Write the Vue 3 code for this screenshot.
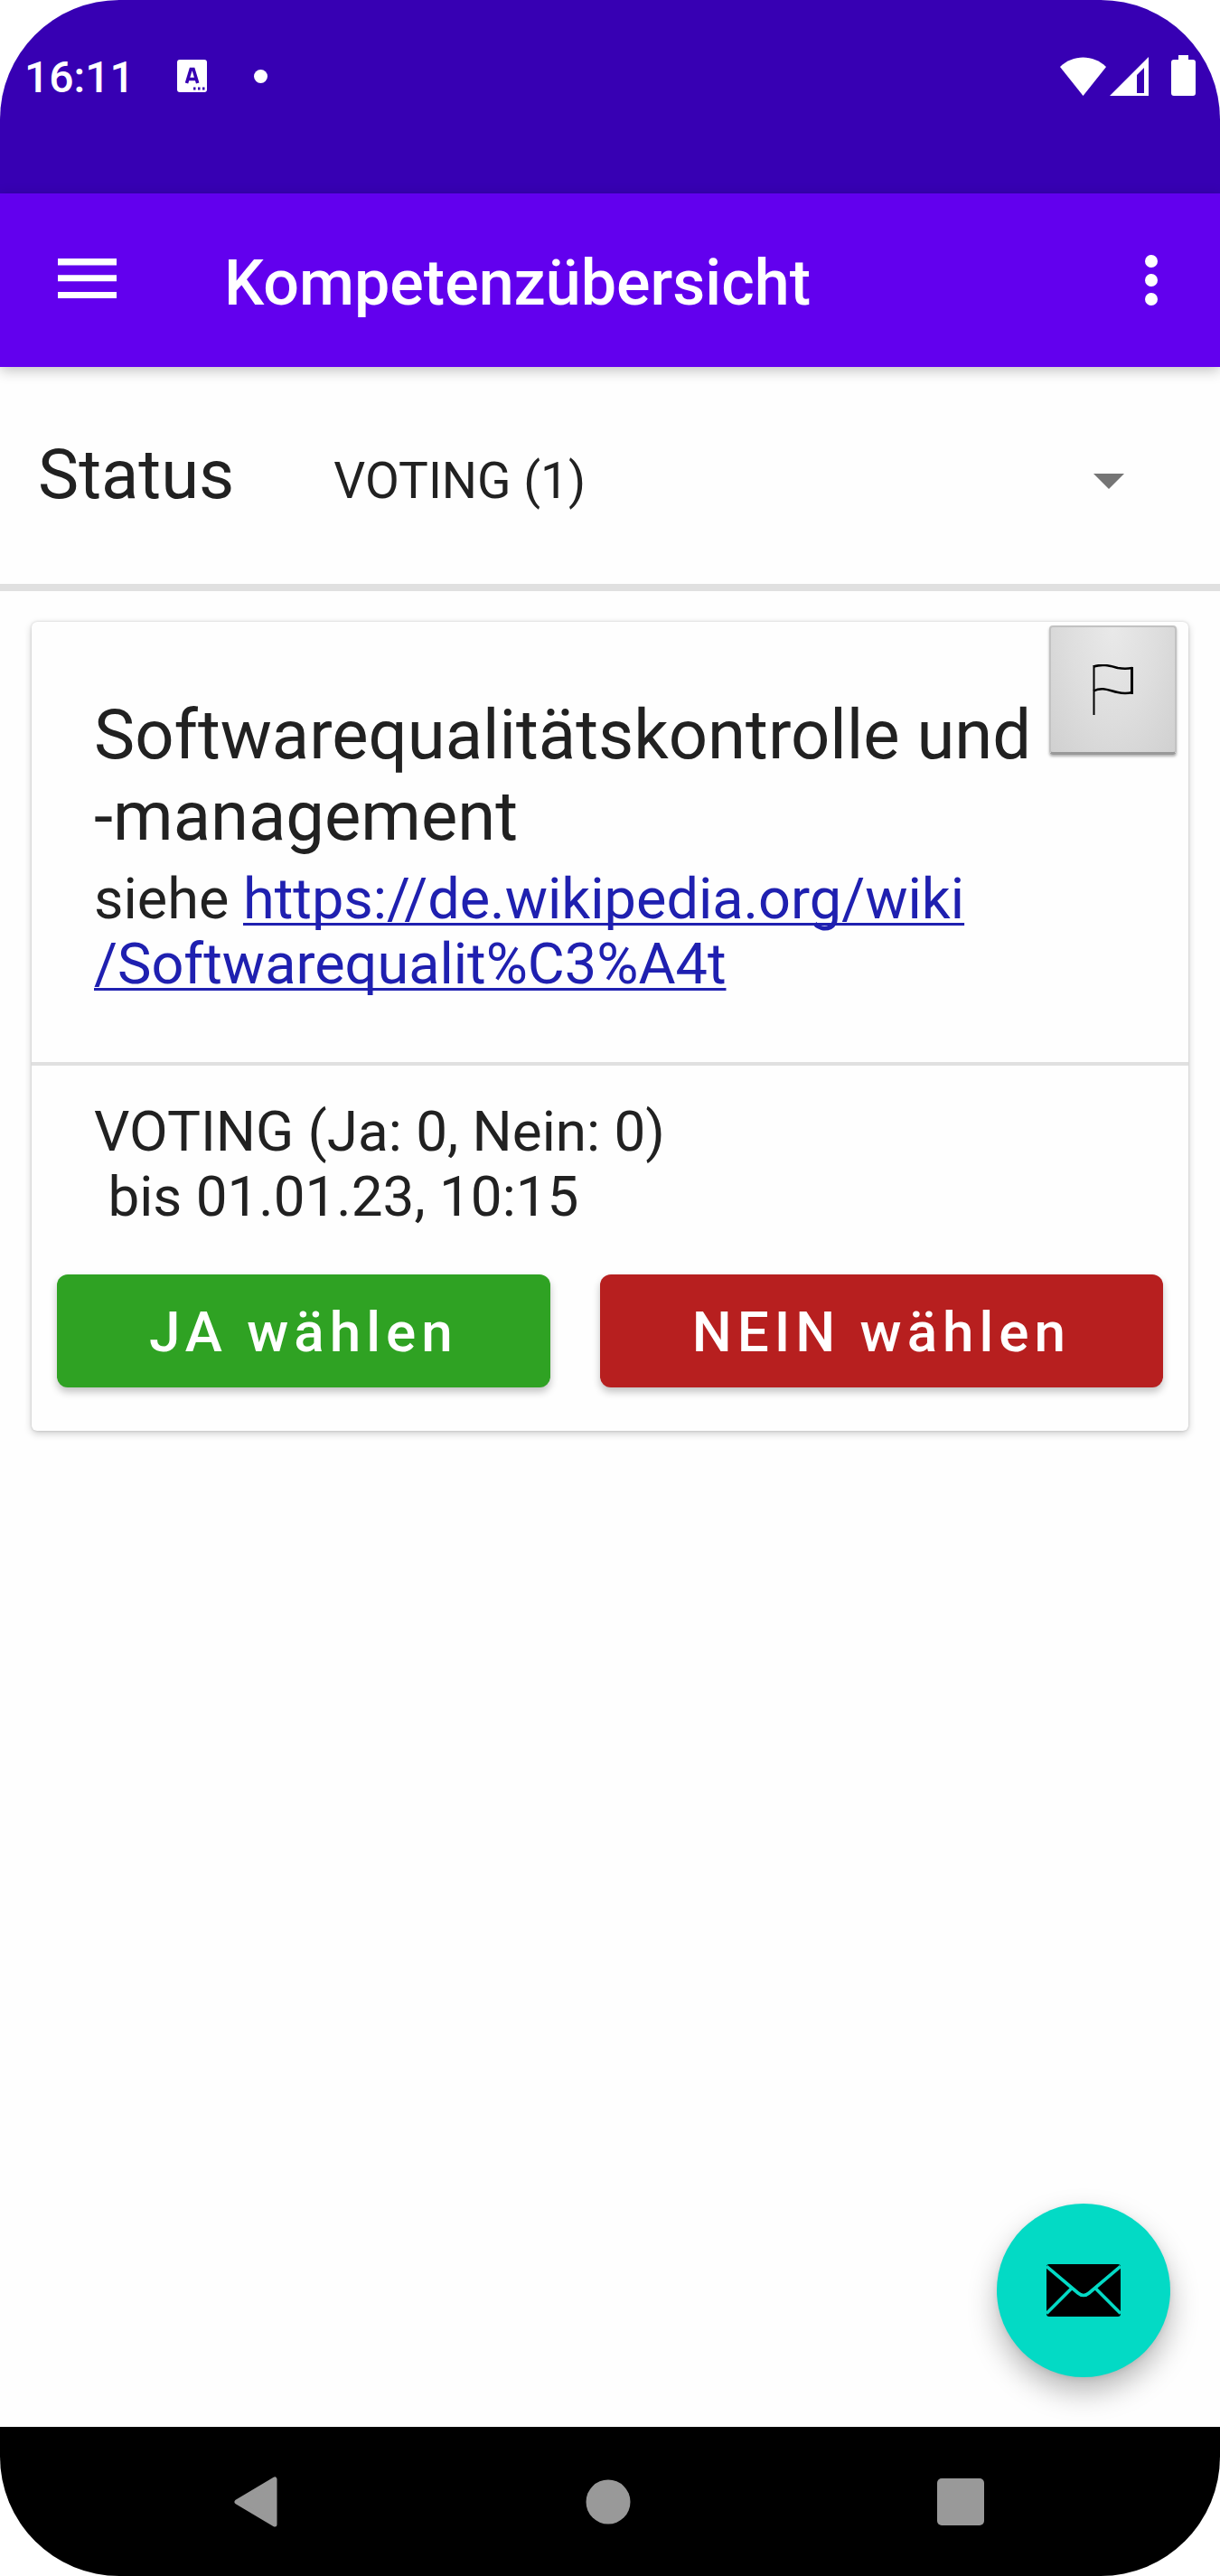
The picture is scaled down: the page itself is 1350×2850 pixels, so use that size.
<script setup>
import { ref } from 'vue'

const status = ref('voting')
const statusOptions = [{ value: 'voting', label: 'VOTING (1)' }]

const competence = {
  title: 'Softwarequalitätskontrolle und -management',
  link: 'https://de.wikipedia.org/wiki/Softwarequalit%C3%A4t',
  linkParts: ['https://de.wikipedia.org/wiki', '/Softwarequalit%C3%A4t'],
  yes: 0,
  no: 0,
  until: '01.01.23, 10:15',
}
</script>

<template>
  <div class="device">
    <div class="status-bar">
      <div class="status-left">
        <span class="clock">16:11</span>
        <svg class="keyboard-icon" width="33" height="36" viewBox="0 0 33 36" aria-hidden="true">
          <rect width="33" height="36" rx="3" fill="#fff" />
          <path d="M10.500 26 15.200 10.500h2.800L22.700 26M12.500 21.500h8" fill="none" stroke="#3700b3" stroke-width="3.600" />
          <path d="M18 30.500h2.500v3H18zm5 0h2.500v3H23zm5 0h2.500v3H28z" fill="#3700b3" />
        </svg>
        <span class="notification-dot"></span>
      </div>
      <div class="status-right">
        <svg width="98" height="45" viewBox="0 0 98 45" fill="#fff" aria-hidden="true">
          <path d="M0 13C14-1 37-1 51 13L25.500 45z" />
          <path fill-rule="evenodd" d="M98 2v43H55zM93 14l-8 8v20h8z" />
        </svg>
        <svg width="27" height="45" viewBox="0 0 27 45" fill="#fff" aria-hidden="true">
          <path d="M8 0h11v5h5q3 0 3 3v34q0 3-3 3H3q-3 0-3-3V8q0-3 3-3h5z" />
        </svg>
      </div>
    </div>

    <header class="app-bar">
      <button class="icon-button" type="button" aria-label="Menü öffnen">
        <svg width="65" height="48" viewBox="0 0 65 48" fill="#fff" aria-hidden="true">
          <path d="M0 0h65v7.500H0zM0 18.300h65v7H0zM0 37h65v7H0z" />
        </svg>
      </button>
      <h1>Kompetenzübersicht</h1>
      <button class="icon-button more" type="button" aria-label="Weitere Optionen">
        <svg width="14" height="56" viewBox="0 0 14 56" fill="#fff" aria-hidden="true">
          <circle cx="7" cy="7" r="7" />
          <circle cx="7" cy="28" r="7" />
          <circle cx="7" cy="49" r="7" />
        </svg>
      </button>
    </header>

    <main>
      <div class="filter">
        <label for="status-filter">Status</label>
        <div class="spinner">
          <select id="status-filter" v-model="status">
            <option v-for="o in statusOptions" :key="o.value" :value="o.value">{{ o.label }}</option>
          </select>
          <svg class="arrow" width="34" height="17" viewBox="0 0 34 17" aria-hidden="true">
            <path d="M0 0h34L17 17z" fill="#757575" />
          </svg>
        </div>
      </div>

      <article class="card">
        <div class="card-head">
          <div class="card-text">
            <h2>{{ competence.title }}</h2>
            <p class="description">
              siehe
              <a :href="competence.link"><span>{{ competence.linkParts[0] }}</span><wbr /><span>{{ competence.linkParts[1] }}</span></a>
            </p>
          </div>
          <button class="flag" type="button" aria-label="Melden">
            <svg width="46" height="56" viewBox="0 0 46 56" fill="none" stroke="#000" aria-hidden="true">
              <path d="M1.500 1v55" stroke-width="2" />
              <path d="M1 2.500C12-1 20 2 28 4q8 1.500 16 0" stroke-width="2.500" />
              <path d="M43.500 3v30" stroke-width="3" />
              <path d="M1 29.500C12 24 20 30 28 31q8 2 16 0" stroke-width="2.500" />
            </svg>
          </button>
        </div>
        <div class="voting">
          <p>VOTING (Ja: {{ competence.yes }}, Nein: {{ competence.no }})</p>
          <p class="until"> bis {{ competence.until }}</p>
        </div>
        <div class="actions">
          <button class="vote yes" type="button">JA wählen</button>
          <button class="vote no" type="button">NEIN wählen</button>
        </div>
      </article>

      <button class="fab" type="button" aria-label="Nachricht senden">
        <svg width="82" height="58" viewBox="0 0 82 58" aria-hidden="true">
          <rect width="82" height="58" rx="3" fill="#000" />
          <path d="M0 2.500 35 32q6 5 12 0L82 2.500M0 54.500 27.500 27M82 54.500 54.500 27" fill="none" stroke="#03dac5" stroke-width="3.600" />
        </svg>
      </button>
    </main>

    <nav class="nav-bar" aria-label="Systemnavigation">
      <button type="button" aria-label="Zurück">
        <svg width="48" height="56" viewBox="0 0 48 56" aria-hidden="true">
          <path d="M3 28 45 3v50z" fill="#999" stroke="#999" stroke-width="5" stroke-linejoin="round" />
        </svg>
      </button>
      <button type="button" aria-label="Startbildschirm">
        <svg width="50" height="50" viewBox="0 0 50 50" aria-hidden="true">
          <circle cx="25" cy="25" r="24.500" fill="#999" />
        </svg>
      </button>
      <button type="button" aria-label="Übersicht">
        <svg width="52" height="52" viewBox="0 0 52 52" aria-hidden="true">
          <rect width="52" height="52" rx="5" fill="#999" />
        </svg>
      </button>
    </nav>
  </div>
</template>

<style>
body {
  margin: 0;
  background: #fff;
}
</style>

<style scoped>
.device {
  display: flex;
  flex-direction: column;
  min-height: 100vh;
  overflow: hidden;
  border-radius: 132px;
  background: #fefefe;
  color: #212121;
  font-family: Roboto, "Liberation Sans", sans-serif;
}

button {
  margin: 0;
  padding: 0;
  border: 0;
  background: none;
  font: inherit;
  cursor: pointer;
}

svg {
  display: block;
}

h1,
h2,
p {
  margin: 0;
  font-weight: 400;
}

.status-bar {
  display: flex;
  justify-content: space-between;
  align-items: flex-start;
  box-sizing: border-box;
  height: 214px;
  padding: 56px 27px 0;
  background: #3700b3;
  color: #fff;
}

.status-left {
  display: flex;
  align-items: center;
  height: 56px;
}

.clock {
  padding-top: 4px;
  font-size: 48px;
  font-weight: 500;
  line-height: 60px;
}

.keyboard-icon {
  margin-left: 47px;
}

.notification-dot {
  width: 15px;
  height: 15px;
  margin-left: 52px;
  border-radius: 50%;
  background: #fff;
}

.status-right {
  display: flex;
  gap: 25px;
  padding-top: 5px;
}

.app-bar {
  position: relative;
  display: flex;
  align-items: center;
  height: 192px;
  background: #6200ee;
  color: #fff;
  box-shadow: 0 4px 14px rgba(0, 0, 0, 0.24);
}

.icon-button {
  display: flex;
  justify-content: center;
  align-items: center;
  width: 192px;
  height: 192px;
}

.app-bar h1 {
  flex: 1;
  margin-left: 56px;
  padding-top: 6px;
  font-size: 70px;
  font-weight: 500;
  line-height: 80px;
}

.icon-button.more {
  width: 152px;
}

main {
  position: relative;
  flex: 1;
}

.filter {
  display: flex;
  align-items: baseline;
  box-sizing: border-box;
  height: 248px;
  padding: 74px 42px 0;
  border-bottom: 8px solid #e0e0e0;
}

.filter label {
  font-size: 76px;
  line-height: 90px;
}

.spinner {
  position: relative;
  flex: 1;
  margin-left: 110px;
}

.spinner select {
  display: block;
  width: 100%;
  height: 64px;
  margin: 0;
  padding: 0;
  border: 0;
  appearance: none;
  background: none;
  color: inherit;
  font: 400 55px/64px Roboto, "Liberation Sans", sans-serif;
}

.arrow {
  position: absolute;
  top: 24px;
  right: 64px;
  pointer-events: none;
}

.card {
  margin: 34px 35px 0;
  border-radius: 6px;
  background: #fefefe;
  box-shadow: 0 3px 8px rgba(0, 0, 0, 0.2), 0 0 3px rgba(0, 0, 0, 0.16);
}

.card-head {
  display: flex;
  align-items: flex-start;
  border-bottom: 4px solid #e0e0e0;
}

.card-text {
  flex: 1;
  padding: 80px 0 72px 69px;
}

.card-text h2 {
  font-size: 76px;
  line-height: 90px;
}

.card p {
  font-size: 62px;
  line-height: 72px;
}

.card .description {
  margin-top: 11px;
  font-size: 63px;
}

.card a {
  color: #1f20b0;
  text-decoration: underline 3px;
  text-decoration-skip-ink: none;
  text-underline-offset: 5px;
}

.card a span {
  white-space: nowrap;
}

.flag {
  display: flex;
  justify-content: center;
  align-items: center;
  box-sizing: border-box;
  width: 141px;
  height: 143px;
  margin: 4px 13px 0 0;
  border: 2px solid #c2c2c2;
  border-bottom: 3px solid #999;
  border-radius: 4px;
  background: radial-gradient(ellipse at 50% 0, #e9e9e9, #dedede 50%, #d0d0d0);
  box-shadow: 0 2px 3px rgba(0, 0, 0, 0.3);
}

.voting {
  padding: 37px 69px 50px;
}

.until {
  white-space: pre;
}

.actions {
  display: flex;
  gap: 55px;
  padding: 0 28px 48px;
}

.vote {
  flex: 1 1 auto;
  height: 125px;
  padding-top: 2px;
  border-radius: 12px;
  color: #fff;
  font-size: 62px;
  font-weight: 500;
  letter-spacing: 6px;
  box-shadow: 0 5px 8px rgba(0, 0, 0, 0.24);
}

.yes {
  background: #2fa223;
}

.no {
  background: #b71f1f;
}

.fab {
  position: absolute;
  right: 55px;
  bottom: 55px;
  display: flex;
  justify-content: center;
  align-items: center;
  width: 192px;
  height: 192px;
  border-radius: 50%;
  background: #03dac5;
  box-shadow: 0 16px 32px rgba(0, 0, 0, 0.28), 0 2px 6px rgba(0, 0, 0, 0.08);
}

.nav-bar {
  display: flex;
  justify-content: center;
  height: 165px;
  padding-right: 4px;
  background: #000;
}

.nav-bar button {
  display: flex;
  justify-content: center;
  align-items: center;
  width: 29%;
}
</style>
